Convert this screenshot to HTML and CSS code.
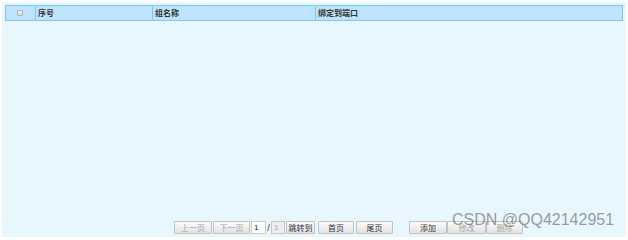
FILE: index.html
```html
<!DOCTYPE html>
<html>
<head>
<meta charset="utf-8">
<link rel="stylesheet" href="styles.css">
</head>
<body>
<div class="panel">
  <div class="thead">
    <div class="cell c-check"><span class="cb"></span></div>
    <div class="cell c-no">序号</div>
    <div class="cell c-name">组名称</div>
    <div class="cell c-port">绑定到端口</div>
  </div>
  <div class="tbody"></div>
  <div class="pager">
    <div class="group">
      <button class="btn off w38">上一页</button>
      <button class="btn off w37">下一页</button>
      <input class="pin" value="1">
      <span class="slash">/</span>
      <input class="pin dis" value="1" disabled>
      <button class="btn w29">跳转到</button>
      <button class="btn w36 ml3">首页</button>
      <button class="btn w37 ml2">尾页</button>
    </div>
    <div class="group tight">
      <button class="btn w38">添加</button>
      <button class="btn off w39">修改</button>
      <button class="btn off w37">删除</button>
    </div>
  </div>
  <div class="watermark">CSDN @QQ42142951</div>
</div>
</body>
</html>
```
FILE: styles.css
```css
* { box-sizing: border-box; }
html, body { margin: 0; padding: 0; background: #ffffff; }
body { width: 628px; height: 240px; overflow: hidden; font-family: "Noto Sans CJK SC", "Liberation Sans", sans-serif; }
.panel {
  position: relative;
  margin: 2px;
  height: 235px;
  background: #e8f6fe;
  padding: 3px 3px 3px 3px;
  display: flex;
  flex-direction: column;
}
.thead {
  display: flex;
  height: 16px;
  background: #bde4fb;
  border: 1px solid #84c6e8;
}
.cell {
  font-size: 8px;
  font-weight: bold;
  color: #333;
  line-height: 14px;
  padding-left: 2px;
  border-left: 1px solid #84c6e8;
}
.c-check { width: 29px; border-left: none; display: flex; align-items: center; justify-content: center; padding-left: 0; }
.c-no { width: 117px; }
.c-name { width: 163px; }
.c-port { flex: 1; }
.cb {
  display: block;
  width: 6px; height: 6px;
  border: 1px solid #a9b4bc;
  background: linear-gradient(#f4f4f4, #d8d8d8);
  border-radius: 1px;
  margin-left: -1px;
}
.tbody { flex: 1; }
.pager {
  display: flex;
  align-items: center;
  padding-left: 169px;
  height: 13px;
  gap: 16px;
}
.group { display: flex; align-items: center; gap: 1px; }
.group.tight { gap: 0; }
.btn {
  height: 13px;
  padding: 0;
  margin: 0;
  border: 1px solid #c2c2c2;
  background: linear-gradient(#fbfbfb, #e2e2e2);
  font-family: "Noto Sans CJK SC", sans-serif;
  font-size: 8px;
  line-height: 11px;
  color: #333;
  border-radius: 1px;
}
.btn.off { color: #a8a8a8; }
.w29 { width: 29px; }
.w36 { width: 36px; }
.w37 { width: 37px; }
.w38 { width: 38px; }
.w39 { width: 39px; }
.ml2 { margin-left: 1px; }
.ml3 { margin-left: 2px; }
.pin {
  width: 15px;
  height: 13px;
  margin: 0;
  padding: 0 0 0 2px;
  border: 1px solid #c8c8c8;
  background: #fff;
  font-family: "Liberation Sans", sans-serif;
  font-size: 8px;
  color: #222;
  outline: none;
}
.pin.dis { width: 14px; background: #ececec; color: #aaa; }
.slash { font-family: "Liberation Sans", sans-serif; font-size: 9px; color: #333; width: 3px; text-align: center; }
.watermark {
  position: absolute;
  left: 450px;
  top: 209px;
  font-family: "Liberation Sans", sans-serif;
  font-size: 16px;
  line-height: 18px;
  color: rgba(90, 90, 90, 0.6);
  white-space: nowrap;
  pointer-events: none;
}
```
